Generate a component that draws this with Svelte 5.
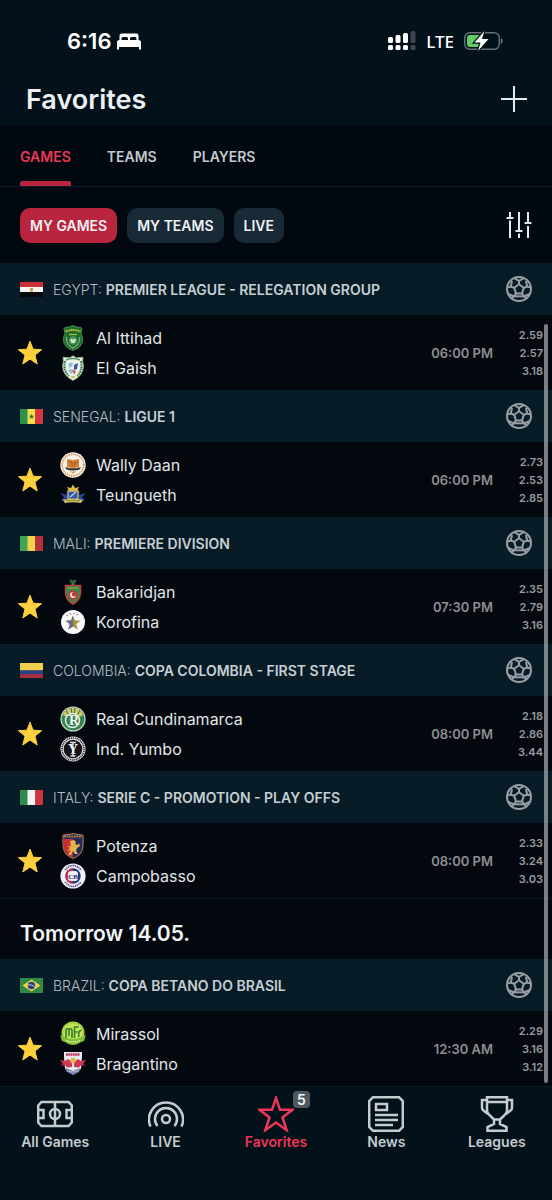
<script>
  const tabs = ['Games', 'Teams', 'Players'];
  const filters = ['My games', 'My teams', 'Live'];

  let activeTab = $state('Games');
  let activeFilter = $state('My games');

  const today = [
    {
      country: 'Egypt',
      league: 'Premier League - Relegation Group',
      home: 'Al Ittihad',
      away: 'El Gaish',
      time: '06:00 PM',
      odds: ['2.59', '2.57', '3.18']
    },
    {
      country: 'Senegal',
      league: 'Ligue 1',
      home: 'Wally Daan',
      away: 'Teungueth',
      time: '06:00 PM',
      odds: ['2.73', '2.53', '2.85']
    },
    {
      country: 'Mali',
      league: 'Premiere Division',
      home: 'Bakaridjan',
      away: 'Korofina',
      time: '07:30 PM',
      odds: ['2.35', '2.79', '3.16']
    },
    {
      country: 'Colombia',
      league: 'Copa Colombia - First Stage',
      home: 'Real Cundinamarca',
      away: 'Ind. Yumbo',
      time: '08:00 PM',
      odds: ['2.18', '2.86', '3.44']
    },
    {
      country: 'Italy',
      league: 'Serie C - Promotion - Play Offs',
      home: 'Potenza',
      away: 'Campobasso',
      time: '08:00 PM',
      odds: ['2.33', '3.24', '3.03']
    }
  ];

  const tomorrow = [
    {
      country: 'Brazil',
      league: 'Copa Betano do Brasil',
      home: 'Mirassol',
      away: 'Bragantino',
      time: '12:30 AM',
      odds: ['2.29', '3.16', '3.12']
    }
  ];

  const navItems = ['All Games', 'LIVE', 'Favorites', 'News', 'Leagues'];
</script>

{#snippet flag(country)}
  <svg class="flag" viewBox="0 0 23 15" aria-hidden="true">
    {#if country === 'Egypt'}
      <rect width="23" height="5" fill="#c9303a" />
      <rect y="5" width="23" height="5" fill="#f4f4f2" />
      <rect y="10" width="23" height="5" fill="#07090b" />
      <path d="M10 6h3v3l-1.500 1-1.500-1z" fill="#c4a24e" />
    {:else if country === 'Senegal'}
      <rect width="8" height="15" fill="#2f8f4c" />
      <rect x="7.500" width="8" height="15" fill="#f3e04c" />
      <rect x="15.300" width="7.700" height="15" fill="#d8363f" />
      <path d="M11.500 4.800l.7 2h2l-1.600 1.200.6 2-1.700-1.200L9.800 10l.6-2-1.600-1.200h2z" fill="#2c6e34" />
    {:else if country === 'Mali'}
      <rect width="8" height="15" fill="#3fa552" />
      <rect x="7.500" width="8" height="15" fill="#f0d24c" />
      <rect x="15.300" width="7.700" height="15" fill="#b9303b" />
    {:else if country === 'Colombia'}
      <rect width="23" height="7.500" fill="#eed04c" />
      <rect y="7.500" width="23" height="4" fill="#2c3f8c" />
      <rect y="11.200" width="23" height="3.800" fill="#a93040" />
    {:else if country === 'Italy'}
      <rect width="8" height="15" fill="#2e8b4f" />
      <rect x="7.500" width="8" height="15" fill="#f2f3f2" />
      <rect x="15.300" width="7.700" height="15" fill="#cb3540" />
    {:else}
      <rect width="23" height="15" fill="#2f8a48" />
      <path d="M11.500 1.500l9 6-9 6-9-6z" fill="#f0d53e" />
      <circle cx="11.500" cy="7.500" r="3.700" fill="#24408e" />
      <path d="M8 6.800q4-.6 6.800 2" stroke="#d8e0ec" stroke-width=".8" fill="none" />
    {/if}
  </svg>
{/snippet}

{#snippet crest(team)}
  <svg class="crest" viewBox="0 0 26 26" aria-hidden="true">
    {#if team === 'Al Ittihad'}
      <path d="M5 2.500Q9 2.500 13 .5q4 2 8 2l1 1-1 5q2 3 1.500 8Q21 23 13 25.500 5 23 3.500 16.500 3 11.500 5 8.500L4 3.500z" fill="#1f6d2c" stroke="#4f9a55" stroke-width=".8" />
      <path d="M5.500 6.500q7.500-3 15 0" stroke="#c5c53f" stroke-width="1.800" stroke-dasharray="1.300 .5" fill="none" />
      <path d="M9 9.500h8" stroke="#b7bd3f" stroke-width="1.200" />
      <path d="M6.500 12q-.5 8 6.500 11 7-3 6.500-11" fill="none" stroke="#a9cfaa" stroke-width="1.100" stroke-dasharray="1.500 .6" />
      <circle cx="13" cy="15.500" r="4.200" fill="#4b9656" />
      <path d="M10 14.500l2-1 1 2 1-2 2 1-1.500 3.500h-3z" fill="#d6e5d3" />
    {:else if team === 'El Gaish'}
      <path d="M13 .7l3 2 7-.5Q22 6 23.500 11 23 21 13 25.500 3 21 2.500 11 4 6 3 2.200l7 .5z" fill="#eef1e8" stroke="#92ac78" stroke-width=".8" />
      <path d="M5 6q-2 10 4 15M21 6q2 10-4 15" fill="none" stroke="#3a8453" stroke-width="2" stroke-dasharray="1.800 .7" />
      <path d="M6 5q7-3 14 0" stroke="#48925d" stroke-width="1.600" fill="none" />
      <path d="M8 9l4-2 1 3-3 3zM8 15l3 4 2-2-1-3z" fill="#8fbed8" />
      <path d="M14 10l4-2-1 6-3 1z" fill="#3550b0" />
      <path d="M12 14.500l4 2-2 3z" fill="#c45349" />
      <path d="M11 22h4" stroke="#c9ae3a" stroke-width="1.500" />
    {:else if team === 'Wally Daan'}
      <circle cx="13" cy="13" r="12.700" fill="#f8f5ee" />
      <circle cx="13" cy="13" r="10.800" fill="none" stroke="#d58d47" stroke-width="1.700" stroke-dasharray="1.300 .9" />
      <path d="M7 7l6 1 6-1v8l-6 2-6-2z" fill="#dc8030" />
      <path d="M8.500 10h3.500v4M18 10l-3.500.5V14" fill="none" stroke="#7d5b40" stroke-width="1" />
      <path d="M5 15q8 3 16 0l-1.500 2.500q-6.500 2-13 0z" fill="#27303a" />
      <path d="M9.500 19q3.500 1 7 0L13 22z" fill="#d9a343" />
    {:else if team === 'Teungueth'}
      <path d="M0 11l7 2-1-4 4 3 3-8 3 8 4-3-1 4 7-2-4 4 3 3-4 1-16 1-4-2 3-3z" fill="#27459a" />
      <path d="M13 2.500l2 3.500 4-1-2 4H9L7 5l4 1z" fill="#d9bf48" />
      <path d="M8 9h10v7l-5 3-5-3z" fill="#3155b0" stroke="#d2bd58" stroke-width="1.300" />
      <path d="M10 15l6-5" stroke="#cbd4e8" stroke-width="1.200" />
      <path d="M3 18q10-3 20 0l-2 3q-8-1.500-16 0z" fill="#d2c363" />
      <path d="M6 19q7-1.500 14 0" stroke="#756b27" stroke-width=".7" fill="none" />
    {:else if team === 'Bakaridjan'}
      <path d="M9.500 1.500l1.500-1 2 1 2-1 1.500 1-.7 2.500h-5.600z" fill="#24643e" />
      <path d="M11.500 4h3v2.500h-3z" fill="#3c7f50" />
      <path d="M5.500 6.500h15V14q-.5 7.500-7.500 11-7-3.500-7.500-11z" fill="#358a48" stroke="#c43f3d" stroke-width="1.500" />
      <path d="M8 9h10" stroke="#b7a044" stroke-width="1.500" stroke-dasharray="1.500 .8" />
      <circle cx="13" cy="16" r="4.500" fill="#c23439" />
      <circle cx="13" cy="16" r="2.900" fill="#f0ece8" />
      <circle cx="14" cy="15.300" r="2.200" fill="#c23439" />
    {:else if team === 'Korofina'}
      <circle cx="13" cy="13" r="12" fill="#f8f8fa" />
      <path d="M6.500 7q6.500-5 13 0" fill="none" stroke="#9b9a88" stroke-width="1.500" stroke-dasharray="1.600 2" />
      <path d="M13 6.500l2 5 5.500.2-4.300 3.400 1.500 5.300-4.700-3-4.700 3 1.500-5.300-4.300-3.400 5.500-.2z" fill="#a79339" />
      <path d="M13 6.500v10.900l-4.700 3 1.500-5.300-4.300-3.400 5.500-.2z" fill="#666b8c" />
    {:else if team === 'Real Cundinamarca'}
      <circle cx="13" cy="13" r="12.600" fill="#c3d8c2" />
      <circle cx="13" cy="13" r="11.300" fill="#35804f" />
      <path d="M3 9q3-7.500 10-7.500T23 9q-3 3-10 0-7 3-10 0" fill="#d8c46c" />
      <path d="M6 4.500l3 5M11 2l1 6M15 2l-1 6M20 4.500l-3 5" stroke="#35804f" stroke-width="1.200" />
      <circle cx="12.500" cy="14.500" r="7" fill="#35804f" stroke="#e5eee3" stroke-width="1.500" />
      <text x="14" y="19" class="crest-letter" fill="#f3f6ef">R</text>
    {:else if team === 'Ind. Yumbo'}
      <circle cx="13" cy="13" r="12.500" fill="#e9e6e8" />
      <circle cx="13" cy="13" r="11" fill="none" stroke="#29252a" stroke-width="1.500" stroke-dasharray="1.200 .7" />
      <circle cx="13" cy="13" r="9.300" fill="#151318" />
      <path d="M10 6.500h6M13 6.500V20M10.500 20h5" stroke="#e8e5e6" stroke-width="1.300" />
      <text x="13" y="18" class="crest-letter" fill="#fff">Y</text>
    {:else if team === 'Potenza'}
      <path d="M3 2q5 0 10-1.500Q18 2 23 2q1 15-3 19-3 3-7 4.500Q9 24 6 21 2 17 3 2z" fill="#232a5e" stroke="#d29253" stroke-width=".9" />
      <path d="M3.500 6H13v18.700Q9 23.500 6.500 20.500 3 17 3.500 6z" fill="#c72f32" />
      <path d="M4 3.500h18" stroke="#b47b3e" stroke-width="1.800" stroke-dasharray="1.800 .7" />
      <path d="M10 8l4-1 2 2-1 2 3 1 1-2 1 3-3 2-1 3 2 3h-3l-2-3-2 4H8l3-5-4 1 3-3-3-2 4 .5z" fill="#e8b548" />
    {:else if team === 'Campobasso'}
      <circle cx="13" cy="13" r="12.600" fill="#f0f0f6" />
      <path d="M5 7q8-9 16 0M5 19q8 9 16 0" fill="none" stroke="#4b517e" stroke-width="1.600" stroke-dasharray="1.300 .6" />
      <circle cx="13" cy="13" r="7.700" fill="#23387e" />
      <path d="M13 5.300a7.700 7.700 0 0 0 0 15.400z" fill="#c3364d" />
      <rect x="8" y="8" width="10" height="10" rx="3" fill="#f1f1f5" />
      <text x="13" y="15.500" class="crest-small" fill="#1c2e70">CB</text>
    {:else if team === 'Mirassol'}
      <circle cx="13" cy="12" r="11.500" fill="#a9d340" />
      <circle cx="13" cy="12" r="9.500" fill="#c3e35c" />
      <path d="M6 17V9q1.500-3 3 0v6M9 9q1.500-3 3 0v8" fill="none" stroke="#36812b" stroke-width="1.600" />
      <path d="M14.500 17V6h4M14.500 11h3M21.500 9q-4 1-2.500 7" fill="none" stroke="#36812b" stroke-width="1.600" />
      <path d="M0 14l4 2q9 4 18 0l4-2-2 6-3 1q-8 6-16 0l-3-1z" fill="#7dbe3d" />
      <path d="M6 19.500q7 3 14 0" stroke="#e1ed91" stroke-width="1.500" stroke-dasharray="1.500 .7" fill="none" />
    {:else}
      <path d="M4 1h18v5l-1 12-8 6-8-6L4 6z" fill="#e7e9f0" />
      <path d="M6 3.500h14" stroke="#bd3554" stroke-width="2.400" stroke-dasharray="1.800 .5" />
      <path d="M0 9l5 1 3-2 4 3v5l-5 .5L5 14l-5 1 3-2zM26 9l-5 1-3-2-4 3v5l5 .5 2-2.500 5 1-3-2z" fill="#d13653" />
      <circle cx="13" cy="9.500" r="2.800" fill="#e4b94d" />
      <path d="M5 17l8 3 8-3-2 4-6 3-6-3z" fill="#6b799f" />
      <path d="M7 19.500q6 3 12 0" stroke="#e2e6f0" stroke-width="1" stroke-dasharray="1.400 .7" fill="none" />
    {/if}
  </svg>
{/snippet}

{#snippet leagueBlock(game)}
  <section>
    <h3 class="league">
      {@render flag(game.country)}
      <span class="league-name">{game.country}: <strong>{game.league}</strong></span>
      <svg class="ball" viewBox="0 0 26 26" aria-hidden="true">
        <circle cx="13" cy="13" r="12" />
        <path d="M13 8.300l4.800 3.500-1.800 5.600h-6l-1.800-5.600z" />
        <path d="M13 8.300V4.800M17.800 11.800l3.400-1.200M16 17.400l2.200 2.900M10 17.400l-2.200 2.900M8.200 11.800l-3.400-1.200" />
        <path d="M8.200 2.200L13 4.800l4.800-2.600M24.800 11.400l-3.600-.8L20 5M20.300 22.500l-2.100-2.200 5.500-2.500M5.700 22.500l2.100-2.200-5.500-2.500M1.200 11.400l3.600-.8L6 5" />
        <path d="M7.800 20.300h10.400" />
      </svg>
    </h3>
    <div class="match">
      <button class="star" aria-label="Remove {game.home} - {game.away} from favorites">
        <svg viewBox="0 0 26 26" aria-hidden="true">
          <path d="M13 1.200l3.100 8 8.500.5-6.600 5.400 2.200 8.900-7.200-4.900L5.800 24 8 15.100 1.400 9.700l8.500-.5z" />
        </svg>
      </button>
      <div class="teams">
        <div class="team">{@render crest(game.home)}<span>{game.home}</span></div>
        <div class="team">{@render crest(game.away)}<span>{game.away}</span></div>
      </div>
      <time class="kickoff">{game.time}</time>
      <div class="odds">
        {#each game.odds as odd}
          <span>{odd}</span>
        {/each}
      </div>
    </div>
  </section>
{/snippet}

<div class="page">
  <header class="top">
    <div class="status">
      <div class="clock">
        <span>6:16</span>
        <svg class="bed" viewBox="0 0 24 17" aria-hidden="true">
          <path d="M2.500 7V2.500Q2.500.5 4.500.5h15q2 0 2 2V7h-2V5.500q0-1.500-1.500-1.500h-3.500q-1.500 0-1.500 1.500V7h-2V5.500Q11 4 9.500 4H6Q4.500 4 4.500 5.500V7z" />
          <path d="M2.500 7h19Q24 7 24 9.500V16.500h-2V14H2v2.500H0v-7Q0 7 2.500 7z" />
        </svg>
      </div>
      <div class="signals">
        <svg class="cell" viewBox="0 0 28 20" aria-hidden="true">
          <g fill="#fff">
            <rect x="0" y="6" width="5" height="6" rx="1.500" />
            <rect x="7.500" y="4" width="5" height="8" rx="1.500" />
            <rect x="15" y="2" width="5" height="10" rx="1.500" />
            <rect x="0" y="14" width="5" height="5" rx="1.500" />
            <rect x="7.500" y="14" width="5" height="5" rx="1.500" />
            <rect x="15" y="14" width="5" height="5" rx="1.500" />
          </g>
          <g fill="#3d4650">
            <rect x="22.500" y="0" width="5" height="12" rx="1.500" />
            <rect x="22.500" y="14" width="5" height="5" rx="1.500" />
          </g>
        </svg>
        <span class="lte">LTE</span>
        <svg class="battery" viewBox="0 0 39 20" aria-hidden="true">
          <rect x=".7" y="1.700" width="34.600" height="16.600" rx="5" fill="none" stroke="#66717a" stroke-width="1.400" />
          <path d="M36.800 7v6q2-.8 2-3t-2-3z" fill="#66717a" />
          <rect x="3" y="4" width="17" height="12" rx="3" fill="#65c965" />
          <path d="M20.500 0L10.500 11.500h6L14 20l10.500-12h-6.500z" fill="#fff" stroke="#03111b" stroke-width="2.500" paint-order="stroke" />
        </svg>
      </div>
    </div>
    <div class="title-row">
      <h1>Favorites</h1>
      <button class="icon-button" aria-label="Add favorite">
        <svg viewBox="0 0 26 26" aria-hidden="true">
          <path d="M13 0v26M0 13h26" stroke="#e4ebed" stroke-width="2" />
        </svg>
      </button>
    </div>
  </header>

  <div class="tabs" role="tablist">
    {#each tabs as tab}
      <button
        class="tab"
        class:active={activeTab === tab}
        role="tab"
        aria-selected={activeTab === tab}
        onclick={() => (activeTab = tab)}
      >
        {tab}
      </button>
    {/each}
  </div>

  <div class="filters">
    {#each filters as filter}
      <button
        class="chip"
        class:active={activeFilter === filter}
        aria-pressed={activeFilter === filter}
        onclick={() => (activeFilter = filter)}
      >
        {filter}
      </button>
    {/each}
    <button class="icon-button settings" aria-label="Filter settings">
      <svg viewBox="0 0 26 26" aria-hidden="true">
        <path d="M4 0v6M4 8.500V26M13 0v18M13 21.500V26M22 0v10.500M22 14v12" />
        <path d="M.5 6h7M9.500 19h7M18.500 11h7" />
      </svg>
    </button>
  </div>

  <main class="games">
    {#each today as game}
      {@render leagueBlock(game)}
    {/each}
    <h2 class="day">Tomorrow 14.05.</h2>
    {#each tomorrow as game}
      {@render leagueBlock(game)}
    {/each}
    <div class="scrollbar"></div>
  </main>

  <nav class="bottom-nav">
    {#each navItems as item}
      <a href="#{item.toLowerCase().replace(' ', '-')}" class:current={item === 'Favorites'}>
        <span class="nav-icon">
          <svg viewBox="0 0 36 36" aria-hidden="true">
            {#if item === 'All Games'}
              <path d="M4.500 6h27l3.300 3.500v17L31.500 30h-27l-3.300-3.500v-17zM18 6v24" />
              <circle cx="18" cy="18" r="5" />
              <path d="M1.200 14h5.300v8H1.200M34.800 14h-5.300v8h5.300" />
            {:else if item === 'LIVE'}
              <circle cx="18" cy="23" r="4" />
              <path d="M9.500 30a11 11 0 1 1 17 0" />
              <path d="M2.500 30.500a17 17 0 1 1 31 0" />
            {:else if item === 'Favorites'}
              <path d="M18 2l4 11.800h12.500L24.500 21.500l4.200 12.700L18 26.500 7.300 34.200l4.200-12.700L1.500 13.800H14z" />
            {:else if item === 'News'}
              <path d="M5 1.200h26L34.800 5v26L31 34.800H5L1.200 31V5z" />
              <path d="M8 8h11v6H8z" />
              <path d="M7 19h23M7 24h23M7 29h18" />
            {:else}
              <path d="M8 1.200h20v13q0 2.500-2 4.500l-5 4.800h-6l-5-4.800q-2-2-2-4.500zM8 6h20" />
              <path d="M8 4H3v7.500q0 2 1.500 3L9 18M28 4h5v7.500q0 2-1.500 3L27 18" />
              <path d="M15 23.500V28l-6.500 3v3.800h19V31L21 28v-4.500" />
            {/if}
          </svg>
          {#if item === 'Favorites'}
            <span class="badge">5</span>
          {/if}
        </span>
        <span>{item}</span>
      </a>
    {/each}
  </nav>
</div>

<style>
  :global(body) {
    margin: 0;
    background-color: #01080f;
    color: #dfe5e8;
    font-family: Inter, 'Liberation Sans', sans-serif;
  }

  .page {
    display: flex;
    flex-direction: column;
    min-height: 100vh;
  }

  button {
    margin: 0;
    padding: 0;
    border: none;
    background: none;
    color: inherit;
    font-family: inherit;
    cursor: pointer;
  }

  svg {
    display: block;
    flex: none;
  }

  .top {
    background-color: #03111b;
  }

  .status {
    display: flex;
    align-items: center;
    justify-content: space-between;
    height: 62px;
    padding: 10px 49px 0 67px;
    color: #fff;
  }

  .clock,
  .signals {
    display: flex;
    align-items: center;
  }

  .clock {
    gap: 6px;
    font-size: 22px;
    font-weight: 600;
  }

  .signals {
    gap: 10px;
  }

  .bed {
    width: 24px;
    height: 17px;
    fill: #fff;
  }

  .cell {
    width: 28px;
    height: 20px;
  }

  .lte {
    font-size: 17px;
    font-family: 'Noto Sans', sans-serif;
    font-weight: 500;
  }

  .battery {
    width: 39px;
    height: 20px;
  }

  .title-row {
    display: flex;
    align-items: center;
    justify-content: space-between;
    height: 54px;
    padding: 0 25px 0 26px;
  }

  h1 {
    margin: 0;
    color: #ecf0f2;
    font-size: 27px;
    font-weight: 600;
  }

  .icon-button svg {
    width: 26px;
    height: 26px;
  }

  .tabs {
    display: flex;
    gap: 36px;
    height: 60px;
    padding: 0 20px;
    border-bottom: 1px solid #0b1d29;
  }

  .tab {
    position: relative;
    color: #c3c9cc;
    font-size: 14px;
    font-weight: 600;
    text-transform: uppercase;
  }

  .tab.active {
    color: #ee3658;
  }

  .tab.active::after {
    content: '';
    position: absolute;
    right: 0;
    bottom: 0;
    left: 0;
    height: 5px;
    border-radius: 2px 2px 0 0;
    background-color: #b9243e;
  }

  .filters {
    display: flex;
    align-items: center;
    gap: 10px;
    height: 76px;
    padding: 0 20px;
  }

  .chip {
    height: 35px;
    padding: 0 10px;
    border-radius: 10px;
    background-color: #182a36;
    color: #eef1f3;
    font-size: 14px;
    font-weight: 600;
    text-transform: uppercase;
  }

  .chip.active {
    background-color: #b9243e;
  }

  .settings {
    margin-left: auto;
  }

  .settings path {
    fill: none;
    stroke: #e6ebed;
    stroke-width: 2;
  }

  .games {
    position: relative;
    flex: 1;
    background-color: #02080e;
  }

  .league {
    display: flex;
    align-items: center;
    gap: 10px;
    height: 52px;
    margin: 0;
    padding: 0 20px;
    background-color: #081c27;
    color: #b3bec4;
    font-size: 14px;
    font-weight: 300;
    text-transform: uppercase;
  }

  .league-name {
    flex: 1;
  }

  .league strong {
    color: #c6cfd4;
    font-weight: 600;
  }

  .flag {
    width: 23px;
    height: 15px;
  }

  .ball {
    width: 26px;
    height: 26px;
    fill: none;
    stroke: #989fa4;
    stroke-width: 2;
  }

  .match {
    display: flex;
    align-items: center;
    height: 75px;
    padding: 0 9px 0 17px;
  }

  .star svg {
    width: 26px;
    height: 26px;
    fill: #fed03d;
    stroke: #fed03d;
    stroke-width: 1;
    stroke-linejoin: round;
  }

  .teams {
    flex: 1;
    margin-left: 17px;
  }

  .team {
    display: flex;
    align-items: center;
    gap: 10px;
    height: 30px;
    color: #e1e5e7;
    font-size: 16px;
  }

  .crest {
    width: 26px;
    height: 26px;
  }

  .crest-letter,
  .crest-small {
    font-family: 'Liberation Serif', serif;
    font-size: 14px;
    font-weight: 700;
    text-anchor: middle;
  }

  .crest-small {
    font-size: 7px;
  }

  .kickoff {
    color: #8b8f93;
    font-size: 13px;
    font-weight: 600;
  }

  .odds {
    display: flex;
    flex-direction: column;
    width: 50px;
    color: #979b9f;
    font-size: 11px;
    font-weight: 600;
    line-height: 18px;
    text-align: right;
  }

  .day {
    height: 60px;
    margin: 0;
    padding: 0 20px;
    border-top: 1px solid #0b1a24;
    color: #f2f4f5;
    font-size: 21px;
    font-weight: 600;
    line-height: 70px;
  }

  .scrollbar {
    position: absolute;
    top: 61px;
    right: 4px;
    bottom: 3px;
    width: 4px;
    border-radius: 2px;
    background-color: rgba(160, 166, 170, 0.75);
  }

  .bottom-nav {
    display: grid;
    grid-template-columns: repeat(5, 1fr);
    height: 113px;
    border-top: 1px solid #0a1b25;
    background-color: #03111b;
  }

  .bottom-nav a {
    display: flex;
    flex-direction: column;
    align-items: center;
    gap: 2px;
    padding-top: 9px;
    color: #c5ccd0;
    font-size: 14px;
    font-weight: 600;
    line-height: 16px;
    text-decoration: none;
  }

  .bottom-nav a.current {
    color: #ee3658;
  }

  .nav-icon {
    position: relative;
  }

  .nav-icon svg {
    width: 36px;
    height: 36px;
    fill: none;
    stroke: currentColor;
    stroke-width: 2.5;
  }

  .badge {
    position: absolute;
    top: -5px;
    right: -16px;
    width: 17px;
    border-radius: 4px;
    background-color: #50575d;
    color: #f2f4f5;
    line-height: 17px;
    text-align: center;
  }
</style>
